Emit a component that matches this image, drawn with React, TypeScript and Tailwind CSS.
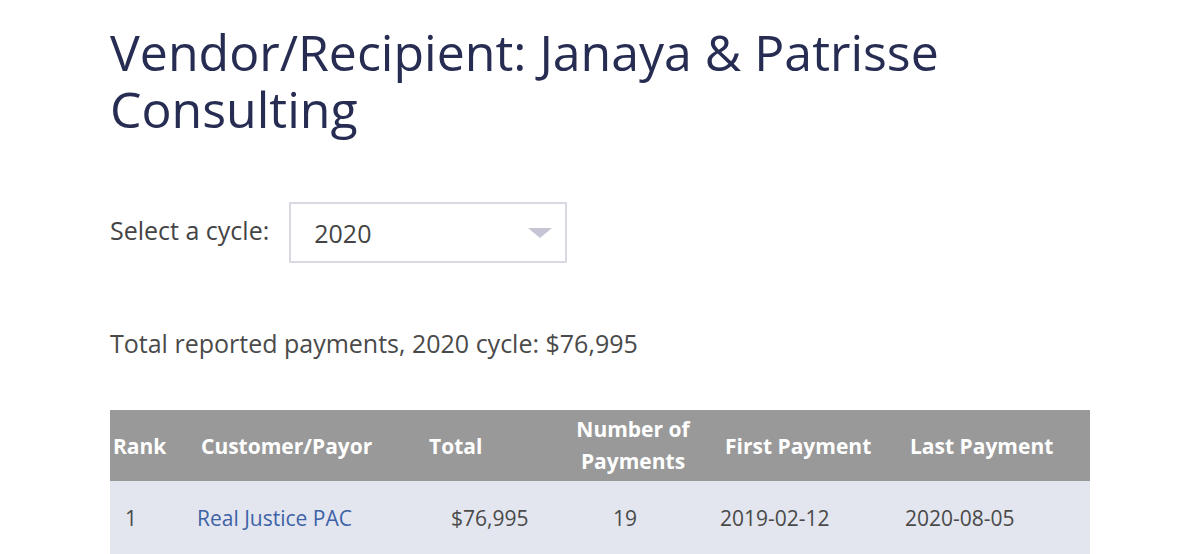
import React from "react"

const font = { fontFamily: '"Open Sans", "Noto Sans", sans-serif' }

export default function App() {
  return (
    <div className="h-[554px] w-[1200px] overflow-hidden bg-white" style={font}>
      <div className="pl-[110px] pr-[110px] pt-[24px]">
        <h1 className="text-[50px] font-normal leading-[57px] text-[#272d52]">
          Vendor/Recipient: Janaya &amp; Patrisse Consulting
        </h1>

        <div className="mt-[64px] flex items-start gap-[20px]">
          <span className="pt-[11px] text-[25px] leading-[34px] text-[#444444]">Select a cycle:</span>
          <div className="flex h-[61px] w-[278px] items-center justify-between border-2 border-[#d9d9e4] pl-[23px] pr-[13px]">
            <span className="pt-[2px] text-[25px] text-[#444444]">2020</span>
            <span className="h-0 w-0 border-x-[12px] border-t-[10px] border-x-transparent border-t-[#c5c5d6]" />
          </div>
        </div>

        <p className="mt-[63px] text-[25px] leading-[34px] text-[#4a4a4a]">
          Total reported payments, 2020 cycle: $76,995
        </p>

        <table className="mt-[50px] w-[980px] border-collapse text-left">
          <thead>
            <tr className="h-[71px] bg-[#999999] text-[21px] font-bold leading-[32px] text-white">
              <th className="w-[88px] pl-[3px] font-bold">Rank</th>
              <th className="w-[228px] pl-[3px] font-bold">Customer/Payor</th>
              <th className="w-[132px] pl-[3px] font-bold">Total</th>
              <th className="w-[158px] pb-[2px] pr-[8px] text-center font-bold">
                Number of
                <br />
                Payments
              </th>
              <th className="w-[186px] pl-[9px] font-bold">First Payment</th>
              <th className="pl-[8px] font-bold">Last Payment</th>
            </tr>
          </thead>
          <tbody>
            <tr className="h-[76px] bg-[#e3e6ee] text-[21px] text-[#4a4a4a]">
              <td className="pl-[15px]">1</td>
              <td>
                <a className="-ml-[1px] text-[#3d62a6]">Real Justice PAC</a>
              </td>
              <td className="pl-[25px]">$76,995</td>
              <td className="pr-[24px] text-center">19</td>
              <td className="pl-[4px]">2019-02-12</td>
              <td className="pl-[3px]">2020-08-05</td>
            </tr>
          </tbody>
        </table>
      </div>
    </div>
  )
}
